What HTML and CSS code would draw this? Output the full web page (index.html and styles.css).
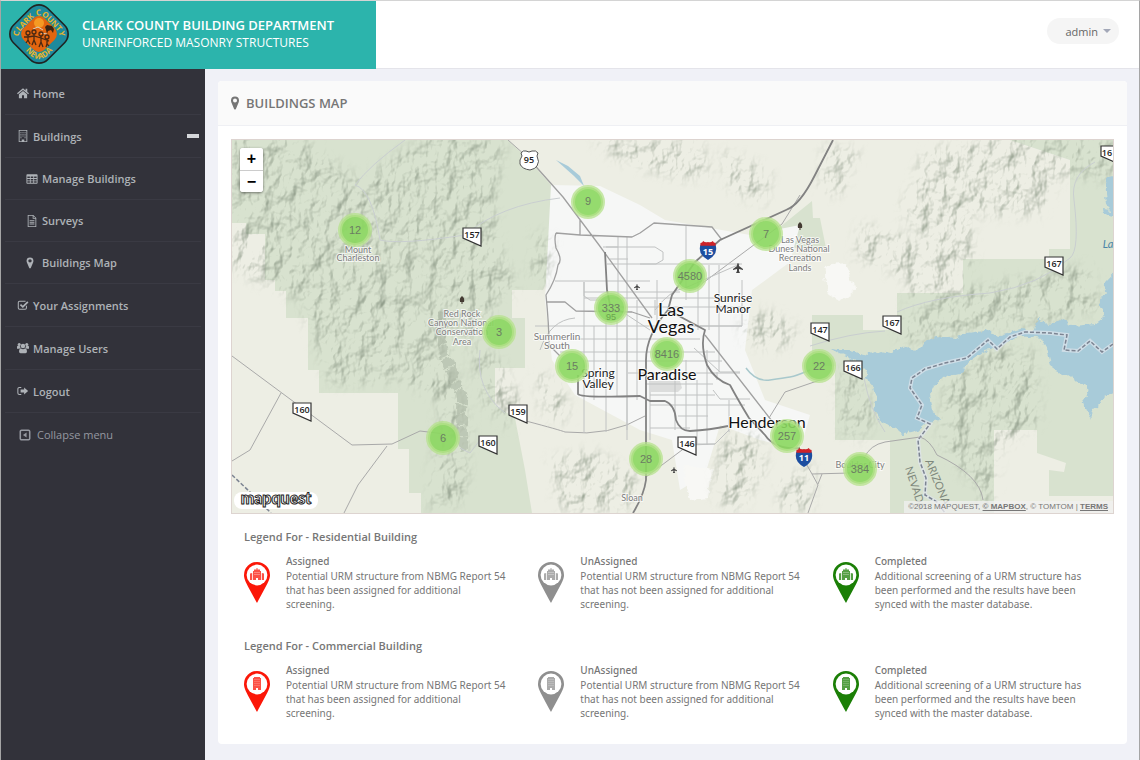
FILE: index.html
```
<!DOCTYPE html>
<html lang="en">
<head>
	<meta charset="utf-8">
	<title>Buildings Map</title>
	<link rel="stylesheet" href="styles.css">
</head>
<body>
	<!-- shared icons -->
	<svg class="sprite" width="0" height="0" aria-hidden="true">
		<symbol id="i-home" viewBox="0 0 14 14"><path d="M7 1.500 0 7.400l1 1.100L7 3.500l6 5 1-1.100L12 5.700V2h-2v2z"/><path d="M7 4.600 2.200 8.600V13H5.800V9.600h2.400V13h3.600V8.600z"/></symbol>
		<symbol id="i-building" viewBox="0 0 14 14"><path fill-rule="evenodd" d="M2 0h10v14H2zM3 1v12h2.500v-2h3v2H11V1z"/><path d="M4 2.500h1.200v1H4zM6.400 2.500h1.200v1H6.400zM8.800 2.500H10v1H8.800zM4 4.500h1.200v1H4zM6.400 4.500h1.200v1H6.400zM8.800 4.500H10v1H8.800zM4 6.500h1.200v1H4zM6.400 6.500h1.200v1H6.400zM8.800 6.500H10v1H8.800zM4 8.500h1.200v1H4zM8.800 8.500H10v1H8.800z"/></symbol>
		<symbol id="i-table" viewBox="0 0 14 14"><path fill-rule="evenodd" d="M1.500 1.500h11q1 0 1 1v9q0 1-1 1h-11q-1 0-1-1v-9q0-1 1-1zM1.600 4v1.900h2.900V4zM5.500 4v1.900h3V4zM9.500 4v1.900h2.900V4zM1.600 6.900v1.800h2.900V6.900zM5.500 6.900v1.800h3V6.900zM9.500 6.900v1.800h2.900V6.900zM1.600 9.700v1.700h2.900V9.700zM5.500 9.700v1.700h3V9.700zM9.500 9.700v1.700h2.900V9.700z"/></symbol>
		<symbol id="i-file" viewBox="0 0 14 14"><path fill-rule="evenodd" d="M2 0h6.500L12 3.500V14H2zM3 1v12h8V4.500H7.800V1zM8.800 1.400v2.100h2.100z"/><path d="M4.200 6h5.600v1H4.200zM4.200 8h5.600v1H4.200zM4.200 10h5.600v1H4.200z"/></symbol>
		<symbol id="i-pin" viewBox="0 0 14 14"><path fill-rule="evenodd" d="M7 0.500a4 4 0 0 1 4 4q0 1.100-.4 1.900L7.900 12.900Q7 14 6.100 12.900L3.400 6.400Q3 5.600 3 4.500a4 4 0 0 1 4-4zM7 2.500a2 2 0 1 0 0 4 2 2 0 0 0 0-4z"/></symbol>
		<symbol id="i-check" viewBox="0 0 14 14"><path d="M11 8v2.500q0 1.500-1.500 1.500H3q-1.500 0-1.500-1.500V4Q1.500 2.500 3 2.500h7" fill="none" stroke="currentColor" stroke-width="1.200"/><path d="M4 6.500 6.800 9.200 12.700 3.300" fill="none" stroke="currentColor" stroke-width="2"/></symbol>
		<symbol id="i-users" viewBox="0 0 14 14"><circle cx="2.600" cy="3" r="1.800"/><circle cx="11.400" cy="3" r="1.800"/><circle cx="7" cy="4.600" r="2.600"/><path d="M0 8V6q0-1.500 1-1.500l2.700.6Q3.600 6.500 4.400 7.300 3 7.400 2.400 8zM14 8V6q0-1.500-1-1.500l-2.700.6q.1 1.400-.7 2.200 1.400.1 2 .7zM2.400 11.400q0-3.700 2.300-3.700Q7 9.100 9.300 7.700q2.300 0 2.300 3.700 0 1.600-1.700 1.600H4.100q-1.700 0-1.700-1.600z"/></symbol>
		<symbol id="i-logout" viewBox="0 0 14 14"><path d="M5 3H2.800Q1 3 1 4.800v4.400Q1 11 2.800 11H5" fill="none" stroke="currentColor" stroke-width="1.200"/><path d="M8.300 2.800 13 7l-4.700 4.200V8.800H4.200V5.200h4.100z"/></symbol>
		<symbol id="i-collapse" viewBox="0 0 14 14"><rect x="1.500" y="1.500" width="11" height="11" rx="1.500" fill="none" stroke="currentColor" stroke-width="1.800"/><path d="M8.800 4.200v5.600L4.600 7z"/></symbol>
		<symbol id="m-res" viewBox="0 0 26 41">
			<path d="M13 0A13 13 0 0 1 26 13C26 18 23 22.500 13 41 3 22.500 0 18 0 13A13 13 0 0 1 13 0z"/>
			<circle cx="13" cy="13" r="10.400" fill="#fff"/>
			<path opacity=".75" d="M12.500 6h1v1.500h2.500V9h1v9h-3v-2h-2v2H9V9h1V7.500h2.500zM6 11.500l2.200-.5v7H6zM17.800 11l2.200.5V18h-2.200z"/>
			<path d="M10.500 10.500h5M10.500 12.500h5" stroke="#fff" stroke-width=".6" stroke-dasharray="1 1"/>
		</symbol>
		<symbol id="m-com" viewBox="0 0 26 41">
			<path d="M13 0A13 13 0 0 1 26 13C26 18 23 22.500 13 41 3 22.500 0 18 0 13A13 13 0 0 1 13 0z"/>
			<circle cx="13" cy="13" r="10.400" fill="#fff"/>
			<path opacity=".75" d="M10 6h6v1h1v12h-3v-2h-2v2H9V7h1z"/>
			<path d="M10.500 8.500h5M10.500 10.500h5M10.500 12.500h5M10.500 14.500h5" stroke="#fff" stroke-width=".6" stroke-dasharray="1 1" opacity=".6"/>
		</symbol>
	</svg>

	<header class="header">
		<div class="brand">
			<svg class="logo" viewBox="0 0 62 62" aria-hidden="true">
				<defs>
					<path id="arcTop" d="M11 35Q10 30 14 26L25 15Q31 9.500 37 15L48 26Q52 30 51 35"/>
					<path id="arcBottom" d="M11 41 23 53Q31 59 39 53L51 41"/>
				</defs>
				<rect x="6" y="6" width="50" height="50" rx="13" transform="rotate(45 31 31)" fill="#1f2423"/>
				<rect x="7.500" y="7.500" width="47" height="47" rx="12" transform="rotate(45 31 31)" fill="#1d8a9c"/>
				<rect x="16" y="16" width="30" height="30" rx="8" transform="rotate(45 31 31)" fill="#e2650f"/>
				<circle cx="31" cy="20" r="5" fill="#f59a23"/>
				<path d="M37 24l2-2 5 1 2 3-1 4-2-3-3 1-1 3-1-4z" fill="#3a2413"/>
				<path d="M25 26l5-2 5 3M33 30l6 1" stroke="#d8d0c0" fill="none"/>
				<g fill="none" stroke="#4a2812" stroke-width="1.300">
					<circle cx="20" cy="30" r="2"/><circle cx="26" cy="29" r="2"/><circle cx="33" cy="31" r="2"/><circle cx="39" cy="34" r="2"/>
					<path d="M20 32v5l-2 3M20 37l2 4M26 31v6l-2 5M26 37l2 5M33 33v6l-2 5M33 39l2 5M39 36v5l-1 3M39 41l2 2M16 34l4 0 6-1 7 2 8 3"/>
				</g>
				<text class="logo-text"><textPath href="#arcTop" startOffset="50%" text-anchor="middle">CLARK COUNTY</textPath></text>
				<text class="logo-text"><textPath href="#arcBottom" startOffset="50%" text-anchor="middle">NEVADA</textPath></text>
			</svg>
			<div class="brand-text">
				<div class="brand-name">CLARK COUNTY BUILDING DEPARTMENT</div>
				<div class="brand-sub">UNREINFORCED MASONRY STRUCTURES</div>
			</div>
		</div>
		<button class="user-menu" type="button">admin <span class="caret"></span></button>
	</header>

	<div class="wrapper">
		<nav class="sidebar">
			<ul class="menu">
				<li><a href="#"><svg class="icon"><use href="#i-home"/></svg>Home</a></li>
				<li>
					<a href="#"><svg class="icon"><use href="#i-building"/></svg>Buildings<span class="minus"></span></a>
					<ul class="submenu">
						<li><a href="#"><svg class="icon"><use href="#i-table"/></svg>Manage Buildings</a></li>
						<li><a href="#"><svg class="icon"><use href="#i-file"/></svg>Surveys</a></li>
						<li><a href="#"><svg class="icon icon-narrow"><use href="#i-pin"/></svg>Buildings Map</a></li>
					</ul>
				</li>
				<li><a href="#"><svg class="icon"><use href="#i-check"/></svg>Your Assignments</a></li>
				<li><a href="#"><svg class="icon"><use href="#i-users"/></svg>Manage Users</a></li>
				<li><a href="#"><svg class="icon"><use href="#i-logout"/></svg>Logout</a></li>
			</ul>
			<button class="collapse" type="button"><svg class="icon"><use href="#i-collapse"/></svg>Collapse menu</button>
		</nav>

		<main class="content">
			<section class="panel">
				<h1 class="panel-heading"><svg class="icon-title"><use href="#i-pin"/></svg>BUILDINGS MAP</h1>
				<div class="panel-body">
					<div class="map">
						<svg class="map-canvas" viewBox="232 140 881 373" role="img" aria-label="Map of Clark County">
							<defs>
								<filter id="relief" x="-5%" y="-5%" width="110%" height="110%" color-interpolation-filters="sRGB">
									<feTurbulence type="fractalNoise" baseFrequency="0.055 0.04" numOctaves="4" seed="7" result="n"/>
									<feDiffuseLighting in="n" surfaceScale="6" diffuseConstant="1" lighting-color="#fff" result="l">
										<feDistantLight azimuth="225" elevation="60"/>
									</feDiffuseLighting>
									<feColorMatrix in="l" type="matrix" values="0 0 0 0 .52  0 0 0 0 .57  0 0 0 0 .50  -1.200 0 0 0 1.050" result="s"/>
									<feGaussianBlur in="SourceAlpha" stdDeviation="6" result="m"/>
									<feComposite in="s" in2="m" operator="in"/>
								</filter>
								<filter id="rough" x="-5%" y="-5%" width="110%" height="110%">
									<feTurbulence type="fractalNoise" baseFrequency="0.12" numOctaves="3" seed="3"/>
									<feDisplacementMap in="SourceGraphic" scale="9" xChannelSelector="R" yChannelSelector="G"/>
								</filter>
								<symbol id="nv" viewBox="-1 -1 21 21" overflow="visible"><path d="M0 0H18V18L0 10Z" fill="#fff" stroke="#333" stroke-width="1.200"/></symbol>
								<symbol id="us" viewBox="0 0 18 20"><path d="M1 4H17Q20 14 9 20Q-2 14 1 4Z" fill="#1c4ea0"/><path d="M1 2Q3 2 4 0Q6 2 9 1Q12 2 14 0Q15 2 17 2V5H1Z" fill="#cc2229"/></symbol>
								<path id="plane" d="M0-5Q1-5 1-2L5 1V2L1 1V3L2 5H-2L-1 3V1L-5 2V1L-1-2Q-1-5 0-5z" fill="#444"/>
								<g id="tree" fill="#443b33"><path d="M-2 2Q-3-2 0-4 3-2 2 2z"/><path d="M-.5 1h1v3h-1z"/></g>
							</defs>

							<rect x="232" y="140" width="881" height="373" fill="#edeee4"/>

							<!-- parks and forest -->
							<g fill="#d8e2cf">
								<path d="M232 140H508L525 156 551 185V272L543 290H512V318H525V368H495V405L515 418 525 470 532 513H421V493H409V449H398V393H319V370H308V318H286V291H275V280H265V234H246V223H232z"/>
								<path d="M1010 140H1113V496H1049V470L1064 472 1066 463 1037 453V430H994V513H890V440H835V366H812V315H863V330H897V293H963V259H1049V249H1070V160z"/>
								<path d="M775 231 812 201 813 218H820L826 248H785z"/>
							</g>

							<!-- urban area -->
							<path fill="#f6f7f6" d="M551 185 600 186 640 205 665 220 750 235 800 225 790 262 752 290 745 350 765 400 810 415 800 450 760 440 720 425 705 475 680 490 672 440 640 430 575 395 552 360 545 300z"/>
							<path fill="#f8f8f5" filter="url(#rough)" d="M825 265 845 262 855 290 840 300 828 292zM683 465 712 470 708 498 690 500z"/>
							<path fill="#dcdddc" d="M651 381H680L682 388 678 392H651z"/>

							<!-- relief -->
							<g filter="url(#relief)">
								<path d="M225 135 300 138 360 180 430 135 505 140 495 200 500 250 520 290 500 300 480 330 450 350 470 430 465 500 430 510 440 400 400 380 330 385 300 300 232 270z"/>
								<path d="M470 340 500 360 520 400 510 430 480 400zM535 230 553 240 548 285 530 280zM590 140H700L710 175 680 180 620 160zM720 150 770 170 765 205 730 190zM825 145 860 150 840 195 820 190z"/>
								<path d="M925 150 1000 138 1113 138V180L1060 175 1040 215 970 215 975 260 950 300 905 300 925 240 900 215zM860 225 900 235 940 255 930 290 880 265 855 260z"/>
								<path d="M900 320 960 290 1090 265 1100 310 1030 325 960 335 900 345zM945 380 1000 345 1035 350 1040 420 1000 450 990 510 940 440zM838 368 862 375 875 420 860 440 838 430z"/>
								<path d="M740 320 770 310 800 330 780 350 745 345zM720 440 760 430 765 470 740 510 715 500zM780 480 815 465 810 510 780 510zM550 460 590 450 640 475 630 510 560 510zM535 370 560 385 570 420 545 420z"/>
							</g>
							<path filter="url(#rough)" d="M440 312Q438 345 450 370T462 400Q460 430 466 450" fill="none" stroke="#b0bba9" stroke-width="11" stroke-dasharray="8 1 13 2" opacity=".65"/>

							<!-- water -->
							<g fill="#a8cbd9" filter="url(#rough)">
								<path d="M831 349 850 351 870 355 880 351 890 353 905 345 915 352 925 342 935 337 955 339 965 333 985 331 1000 335 1020 330 1035 331 1038 318 1050 325 1060 320 1073 326 1095 324 1103 318 1100 300 1107 290 1104 282 1120 265V390L1105 396 1100 405 1094 410 1091 418 1087 412 1083 400 1089 390 1083 385 1070 377 1053 370 1047 350 1040 338 1020 334 1000 347 985 350 968 362 960 374 945 377 934 385 929 396 932 410 940 421 925 424 918 430 905 433 895 430 880 420 873 410 877 400 872 385 865 370 855 360 840 355z"/>
								<path d="M1120 176 1105 180 1107 205 1120 218zM1120 210 1102 208 1103 213 1120 216z"/>
							</g>
							<path d="M556 160 568 166 580 176 584 186 574 176z" fill="#a8cbd9"/>
							<path d="M746 368Q756 382 770 380T790 377 810 370" fill="none" stroke="#a8c8cc" stroke-width="1.500"/>
							<path class="border-halo" d="M1113 344 1102 352 1090 341 1078 351 1064 350 1067 335 1050 333 1025 332 1010 337 997 349 988 340 967 358 945 363 925 369 912 378 910 388 922 405 917 418 930 424 918 440 920 462 926 478 925 495 937 502 945 513"/>
							<path class="border" d="M1113 344 1102 352 1090 341 1078 351 1064 350 1067 335 1050 333 1025 332 1010 337 997 349 988 340 967 358 945 363 925 369 912 378 910 388 922 405 917 418 930 424 918 440 920 462 926 478 925 495 937 502 945 513"/>
							<path class="border" d="M232 475 250 492 271 513"/>

							<!-- rural roads -->
							<g class="road-light">
								<path d="M405 140Q370 165 355 185 372 190 380 240 400 245 465 235 500 205 560 198M810 346Q850 333 885 331M897 312Q930 297 990 293 1040 285 1070 258 1080 250 1074 200 1070 175 1095 162M480 440 470 453 460 448M480 350Q475 390 505 413M864 378Q870 410 885 432"/>
							</g>
							<g class="road-minor">
								<path d="M232 356 352 445 392 444 420 431 445 434M281 393 250 450 232 461M387 446 358 485 344 513M526 421Q560 430 565 432 610 437 645 416M885 442Q870 445 864 458M804 460 812 474 850 473M812 474 818 485 808 513M822 474 818 484M885 442 920 437Q930 440 937 455 980 475 983 500M646 477 690 444"/>
								<path d="M508 140 525 155M700 285 782 224 800 195M769 418 785 392 820 380"/>
							</g>

							<!-- city grid -->
							<g class="road-grid">
								<path d="M618 237V300M627 237V430M686 226V300M698 265V330M709 265V330M719 265V372M742 280V326M584 282V433M594 326V400M606 300V432M617 320V397M627 320V440M637 300V400M650 380V440M655 300V315M675 370V430M686 360V430M697 380V445M707 350V445M717 372V380M729 400V432M657 280V330"/>
								<path d="M606 247H618M610 259H628M607 264H742M555 281H650M584 292H680M584 298H740M606 307H745M535 326H742M570 339H700M560 352H715M583 361H722M628 373H740M645 384H713M650 395H715M650 405H745M678 416H708M650 428H690M686 444H715"/>
								<path d="M694 348 720 372H740M713 390 720 399H750M729 430 715 444 690 445M742 326H700M584 282V296L590 300H606"/>
								<path d="M603 247H655L663 252V260L656 264H640"/>
								<path d="M612 305 650 330M540 350Q550 320 575 318M655 310Q670 290 685 288L740 264"/>
							</g>
							<g class="road-mid">
								<path d="M530 160 563 197 599 245 652 318M556 233 580 235 632 237 640 233 654 223 712 227 722 240M580 220V235M556 233Q554 238 556 248 563 260 558 265 556 280 546 295 549 325 549 345L560 356M546 302 565 302 576 311 632 312 650 318M705 335 775 425"/>
							</g>
							<g class="road-main">
								<path d="M605 252 607 290 610 305M833 140 815 175Q800 205 786 210L720 240 695 262 672 295 668 310Q690 322 705 330 700 345 707 365 715 380 730 385 738 400 749 418L765 435Q775 450 800 448M668 310Q646 335 646 360V480Q644 495 633 513M578 375V394Q580 398 640 396L650 401H665Q675 405 676 420 680 431 690 431 710 430 728 426"/>
							</g>

							<!-- shields -->
							<path d="M521 153Q523 150 526 151 529 153 532 151 536 150 538 153L537 156Q540 162 537 166 535 169 530 170 522 169 520 164 519 160 522 156z" fill="#fff" stroke="#555"/>
							<use href="#us" x="699" y="241" width="18" height="19"/>
							<use href="#us" x="795" y="448" width="18" height="19"/>
							<use href="#nv" x="462" y="227" width="21" height="21"/>
							<use href="#nv" x="292" y="402" width="21" height="21"/>
							<use href="#nv" x="478" y="435" width="21" height="21"/>
							<use href="#nv" x="508" y="404" width="21" height="21"/>
							<use href="#nv" x="677" y="436" width="21" height="21"/>
							<use href="#nv" x="810" y="322" width="21" height="21"/>
							<use href="#nv" x="882" y="315" width="21" height="21"/>
							<use href="#nv" x="843" y="360" width="21" height="21"/>
							<use href="#nv" x="1044" y="256" width="21" height="21"/>
							<use href="#nv" x="1100" y="145" width="21" height="21"/>
							<g class="shield">
								<text x="529" y="163">95</text>
								<text x="472" y="238">157</text>
								<text x="302" y="413">160</text>
								<text x="488" y="446">160</text>
								<text x="518" y="415">159</text>
								<text x="687" y="447">146</text>
								<text x="820" y="333">147</text>
								<text x="892" y="326">167</text>
								<text x="853" y="371">166</text>
								<text x="1054" y="267">167</text>
								<text x="1107" y="156">16</text>
								<text x="708" y="255" class="white">15</text>
								<text x="804" y="461" class="white">11</text>
							</g>

							<!-- place names -->
							<g class="place-sm">
								<text x="358" y="253">Mount</text><text x="358" y="261">Charleston</text>
								<text x="462" y="317">Red Rock</text><text x="461" y="326">Canyon National</text><text x="462" y="335">Conservation</text><text x="462" y="345">Area</text>
								<text x="800" y="243">Las Vegas</text><text x="799" y="252">Dunes National</text><text x="800" y="261">Recreation</text><text x="800" y="271">Lands</text>
								<text x="632" y="501">Sloan</text>
								<text x="860" y="468">Boulder City</text>
							</g>
							<g class="place-md">
								<text x="557" y="340">Summerlin</text><text x="557" y="349">South</text>
							</g>
							<g class="place-town">
								<text x="733" y="302">Sunrise</text><text x="733" y="313">Manor</text>
								<text x="598" y="377">Spring</text><text x="598" y="388">Valley</text>
							</g>
							<g class="place-city">
								<text x="671" y="316" class="capital">Las</text><text x="671" y="333" class="capital">Vegas</text>
								<text x="667" y="380">Paradise</text><text x="767" y="428">Henderson</text>
							</g>
							<text x="1108" y="248" class="lake">La</text>
							<text class="state" transform="translate(905 468) rotate(72)">NEVADA</text>
							<text class="state" transform="translate(925 461) rotate(68)">ARIZONA</text>

							<use href="#plane" x="738" y="268"/>
							<use href="#plane" transform="translate(637 287) scale(.6)"/>
							<use href="#plane" transform="translate(674 470) scale(.6)"/>
							<use href="#tree" x="462" y="300"/>
							<use href="#tree" x="800" y="226"/>

							<!-- clusters -->
							<g class="cluster">
								<circle cx="588" cy="202" r="15"/><text x="588" y="205">9</text>
								<circle cx="355" cy="230" r="15"/><text x="355" y="234">12</text>
								<circle cx="766" cy="234" r="15"/><text x="766" y="238">7</text>
								<circle cx="690" cy="276" r="15"/><text x="690" y="280">4580</text>
								<circle cx="611" cy="308" r="15"/><text x="611" y="312">333</text>
								<circle cx="499" cy="332" r="15"/><text x="499" y="336">3</text>
								<circle cx="667" cy="354" r="15"/><text x="667" y="358">8416</text>
								<circle cx="572" cy="366" r="15"/><text x="572" y="370">15</text>
								<circle cx="819" cy="366" r="15"/><text x="819" y="370">22</text>
								<circle cx="787" cy="436" r="15"/><text x="787" y="440">257</text>
								<circle cx="443" cy="438" r="15"/><text x="443" y="442">6</text>
								<circle cx="646" cy="459" r="15"/><text x="646" y="463">28</text>
								<circle cx="860" cy="469" r="15"/><text x="860" y="473">384</text>
							</g>
							<text class="under" x="611" y="320">95</text>

							<rect x="234" y="492" width="84" height="17" rx="8" fill="#fff"/>
							<text class="mapquest" x="276" y="504">mapquest</text>
						</svg>
						<div class="zoom">
							<button type="button" aria-label="Zoom in">+</button>
							<button type="button" aria-label="Zoom out">−</button>
						</div>
						<div class="attribution">©2018 MAPQUEST, <a href="#">© MAPBOX</a>, © TOMTOM | <a href="#">TERMS</a></div>
					</div>

					<div class="legend">
						<h2>Legend For - Residential Building</h2>
						<div class="legend-row">
							<div class="legend-item">
								<svg class="marker red"><use href="#m-res"/></svg>
								<div>
									<h3>Assigned</h3>
									<p>Potential URM structure from NBMG Report 54 that has been assigned for additional screening.</p>
								</div>
							</div>
							<div class="legend-item">
								<svg class="marker grey"><use href="#m-res"/></svg>
								<div>
									<h3>UnAssigned</h3>
									<p>Potential URM structure from NBMG Report 54 that has not been assigned for additional screening.</p>
								</div>
							</div>
							<div class="legend-item">
								<svg class="marker green"><use href="#m-res"/></svg>
								<div>
									<h3>Completed</h3>
									<p>Additional screening of a URM structure has been performed and the results have been synced with the master database.</p>
								</div>
							</div>
						</div>
					</div>

					<div class="legend">
						<h2>Legend For - Commercial Building</h2>
						<div class="legend-row">
							<div class="legend-item">
								<svg class="marker red"><use href="#m-com"/></svg>
								<div>
									<h3>Assigned</h3>
									<p>Potential URM structure from NBMG Report 54 that has been assigned for additional screening.</p>
								</div>
							</div>
							<div class="legend-item">
								<svg class="marker grey"><use href="#m-com"/></svg>
								<div>
									<h3>UnAssigned</h3>
									<p>Potential URM structure from NBMG Report 54 that has not been assigned for additional screening.</p>
								</div>
							</div>
							<div class="legend-item">
								<svg class="marker green"><use href="#m-com"/></svg>
								<div>
									<h3>Completed</h3>
									<p>Additional screening of a URM structure has been performed and the results have been synced with the master database.</p>
								</div>
							</div>
						</div>
					</div>
				</div>
			</section>
		</main>
	</div>
</body>
</html>
```
FILE: styles.css
```
* {
	box-sizing: border-box;
}

body {
	margin: 0;
	min-height: 100vh;
	display: flex;
	flex-direction: column;
	border: 1px solid #a5a5a5;
	border-top-color: #d4d4d4;
	border-bottom: 0;
	background: #f0f1f7;
	color: #767676;
	font-family: "Open Sans", sans-serif;
	font-size: 11px;
}

a {
	color: inherit;
	text-decoration: none;
}

button {
	border: 0;
	font-family: inherit;
	cursor: pointer;
}

h1, h2, h3, p, ul {
	margin: 0;
	padding: 0;
}

ul {
	list-style: none;
}

.sprite {
	position: absolute;
}

/* header */
.header {
	display: flex;
	justify-content: space-between;
	align-items: center;
	height: 68px;
	background: #fff;
	border-bottom: 1px solid #e4e4ea;
}

.brand {
	display: flex;
	align-items: center;
	width: 375px;
	height: 68px;
	padding-left: 7px;
	background: #2cb4ac;
	color: #fff;
}

.logo {
	width: 62px;
	height: 62px;
	margin-bottom: 2px;
}

.logo-text {
	font: bold 8px "Open Sans", sans-serif;
	fill: #e8b52c;
}

.brand-text {
	margin-left: 12px;
	padding-bottom: 2px;
	line-height: 18px;
	white-space: nowrap;
}

.brand-name {
	font-size: 13px;
	font-weight: 600;
}

.brand-sub {
	font-size: 12px;
}

.user-menu {
	display: flex;
	align-items: center;
	gap: 5px;
	height: 26px;
	margin: 0 20px 7px 0;
	padding: 0 8px 0 18px;
	border-radius: 13px;
	background: #f5f5f5;
	color: #666;
	font-size: 11px;
}

.caret {
	border: 4px solid transparent;
	border-top-color: #a3a8b8;
	border-bottom: 0;
}

/* sidebar */
.wrapper {
	display: flex;
	flex: 1;
}

.sidebar {
	flex: none;
	width: 204px;
	padding: 3px 4px 0;
	background: #32323a;
	color: #aeb2b7;
}

.menu a {
	display: flex;
	align-items: center;
	height: 43px;
	padding-left: 12px;
	border-bottom: 1px solid #3a3a43;
	font-weight: 600;
}

.menu .submenu a {
	height: 42px;
	padding-left: 21px;
}

.menu > li > a {
	padding-right: 2px;
}

.icon {
	width: 12px;
	height: 12px;
	margin-right: 4px;
	fill: currentColor;
}

.submenu .icon-narrow {
	margin-left: -2px;
	margin-right: 6px;
}

.minus {
	width: 12px;
	height: 4px;
	margin-left: auto;
	background: #d5d7da;
}

.collapse {
	display: flex;
	align-items: center;
	height: 43px;
	padding: 0 0 0 14px;
	background: none;
	color: #9598a0;
	font-size: 11px;
}

.collapse .icon {
	margin-right: 6px;
}

/* panel */
.content {
	flex: 1;
	padding: 12px 12px 15px 13px;
}

.panel {
	border-radius: 4px;
	background: #fff;
	overflow: hidden;
}

.panel-heading {
	display: flex;
	align-items: center;
	height: 45px;
	padding-left: 10px;
	background: #fafafa;
	border-bottom: 1px solid #eff0f4;
	font-size: 13px;
	font-weight: 600;
}

.icon-title {
	width: 14px;
	height: 14px;
	margin-right: 4px;
	fill: currentColor;
}

.panel-body {
	padding: 13px 13px 24px;
}

/* map */
.map {
	position: relative;
	border: 1px solid #ddd4d0;
	font-family: "Liberation Sans", sans-serif;
}

.map-canvas {
	display: block;
	width: 100%;
	height: auto;
}

.map-canvas text {
	font-family: Lato, sans-serif;
	text-anchor: middle;
}

.road-light path,
.road-minor path,
.road-grid path,
.road-mid path,
.road-main path {
	fill: none;
	stroke-linejoin: round;
}

.road-light path {
	stroke: #c9ced0;
}

.road-minor path {
	stroke: #a9a9a9;
}

.road-grid path {
	stroke: #c0c2c2;
}

.road-mid path {
	stroke: #a0a0a0;
	stroke-width: 1.3px;
}

.road-main path {
	stroke: #828282;
	stroke-width: 1.8px;
}

.border,
.border-halo {
	fill: none;
	stroke: #7c8492;
	stroke-width: 1.5px;
	stroke-dasharray: 4 2;
}

.border-halo {
	stroke: #dfe6ec;
	stroke-width: 4px;
	stroke-dasharray: none;
	opacity: .7;
}

.map-canvas .shield text {
	font-family: "Open Sans", sans-serif;
	font-size: 9px;
	font-weight: 600;
	fill: #222;
}

.map-canvas .shield .white {
	fill: #fff;
	font-weight: 700;
}

.place-sm,
.place-md,
.place-town,
.place-city {
	paint-order: stroke;
	stroke: rgba(255, 255, 255, .7);
	stroke-width: 2px;
}

.place-sm {
	font-size: 9px;
	fill: #7d7d7d;
}

.place-md {
	font-size: 10px;
	fill: #7d7d7d;
}

.place-town {
	font-size: 12px;
	fill: #222;
}

.place-city {
	font-size: 16px;
	fill: #111;
}

.capital {
	font-size: 18px;
}

.lake {
	font-size: 11px;
	font-style: italic;
	fill: #4a86a8;
}

.map-canvas .state {
	font-size: 11px;
	text-anchor: start;
	fill: #7f887c;
}

.cluster circle {
	fill: #8bd75f;
	fill-opacity: .9;
	stroke: #b5e28c;
	stroke-opacity: .75;
	stroke-width: 4px;
}

.map-canvas .cluster text,
.map-canvas .under {
	font-family: "Liberation Sans", sans-serif;
	font-size: 11px;
	fill: #6b7d62;
}

.map-canvas .under {
	font-size: 9px;
	fill: #69a34c;
}

.map-canvas .mapquest {
	font-family: Lato, sans-serif;
	font-size: 16px;
	font-weight: 900;
	fill: #fff;
	stroke: #222;
	stroke-width: 1px;
}

.zoom {
	position: absolute;
	top: 8px;
	left: 8px;
	width: 23px;
	border-radius: 3px;
	background: #fff;
	box-shadow: 0 1px 3px rgba(0, 0, 0, .5);
	overflow: hidden;
}

.zoom button {
	display: block;
	width: 23px;
	height: 22px;
	padding: 0;
	background: #fff;
	color: #000;
	font: bold 16px/20px "Liberation Sans", sans-serif;
}

.zoom button + button {
	border-top: 1px solid #ccc;
}

.attribution {
	position: absolute;
	right: 0;
	bottom: 0;
	padding: 0 5px 0 4px;
	background: rgba(240, 240, 240, .75);
	color: #777;
	font-size: 8px;
	line-height: 12px;
}

.attribution a {
	font-weight: bold;
	text-decoration: underline;
}

/* legend */
.legend {
	margin-right: -13px;
	padding: 15px 0 0 13px;
}

.legend + .legend {
	padding-top: 27px;
}

.legend h2 {
	margin-bottom: 10px;
	font-size: 11px;
	font-weight: 600;
	line-height: 15px;
}

.legend-row {
	display: grid;
	grid-template-columns: repeat(3, 1fr);
}

.legend-item {
	display: flex;
	gap: 16px;
	padding-right: 29px;
}

.marker {
	flex: none;
	width: 26px;
	height: 41px;
	margin-top: 8px;
}

.red {
	fill: #fb1708;
}

.grey {
	fill: #8f8f8f;
}

.green {
	fill: #1b7f06;
}

.legend h3,
.legend p {
	font-family: "Noto Sans", "Open Sans", sans-serif;
	font-size: 10px;
}

.legend h3 {
	font-weight: 500;
	line-height: 15px;
}

.legend p {
	line-height: 14px;
}
```
